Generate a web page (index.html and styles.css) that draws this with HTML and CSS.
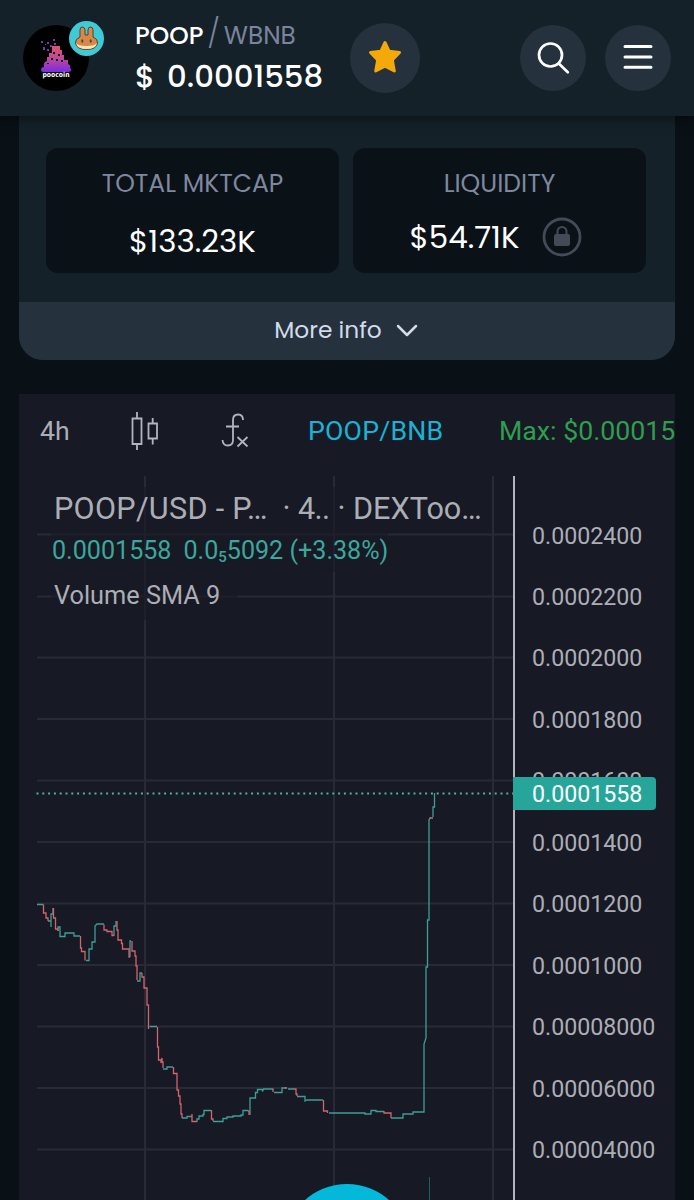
FILE: index.html
```
<!DOCTYPE html>
<html lang="en">
<head>
  <meta charset="UTF-8">
  <meta name="viewport" content="width=device-width, initial-scale=1.0">
  <title>POOP/WBNB</title>
  <link rel="stylesheet" href="styles.css">
</head>
<body>
  <header class="header">
    <div class="avatar">
      <svg class="token" viewBox="0 0 66 66">
        <defs>
          <linearGradient id="pile" x1="0" y1="0" x2="0" y2="1">
            <stop offset="0" stop-color="#e0536e"/>
            <stop offset=".5" stop-color="#bd46a0"/>
            <stop offset="1" stop-color="#7a2be0"/>
          </linearGradient>
        </defs>
        <circle cx="33" cy="33" r="33" fill="#000"/>
        <path fill="url(#pile)" d="M29 21h8v4h2v5h2v5h4v4q3 1 2 4 2 1 1 3-1 1-3 1H20q-2 0-2-2 0-3 3-3-1-5 3-6v-4h2v-4h3z"/>
        <path fill="#000" d="M30 27h2v2h-2zM35 29h2v2h-2zM28 33h2v2h-2zM33 34h2v2h-2zM38 35h2v2h-2zM24 38h2v1h-2z"/>
        <path fill="#7d35a8" d="M18 16h2v2h-2zM24 17h2v2h-2zM30 14h2v2h-2zM27 20h2v2h-2zM20 22h2v3h-2zM24 24h2v2h-2zM31 18h2v2h-2zM22 19h1v1h-1z"/>
        <text x="33" y="52" text-anchor="middle" textLength="27" lengthAdjust="spacingAndGlyphs">poocoin</text>
      </svg>
      <svg class="badge" viewBox="0 0 35 35">
        <circle cx="17.500" cy="17.500" r="17.500" fill="#3fcbd6"/>
        <g stroke="#5f3c26" stroke-width="1">
          <path fill="#d6894a" d="M11 16V9q0-3 2.300-3T16 9v5h3V9q0-3 2.500-3T24 9v7q5 2 4.500 6-1 6.500-11 6.500T6.500 22Q6 18 11 16z"/>
        </g>
        <path fill="#fae3b4" d="M7 22q2 3 10.500 3T28 22q-1 6-10.500 6T7 22z"/>
        <ellipse cx="13.300" cy="20" rx="1" ry="1.800" fill="#5f3c26"/>
        <ellipse cx="21.700" cy="20" rx="1" ry="1.800" fill="#5f3c26"/>
      </svg>
    </div>
    <div class="pair">
      <div class="names"><b>POOP</b><i>/</i><span>WBNB</span></div>
      <div class="price"><span>$</span><span class="amount">0.0001558</span></div>
    </div>
    <div class="btn fav">
      <svg width="34" height="34" viewBox="0 0 34 34">
        <path fill="#f3a908" stroke="#f3a908" stroke-width="3" stroke-linejoin="round" d="M17 2.500l4 8.700 10.500 1.300-7.200 7.400 2 11L17 26.200 7.700 30.900l2-11L2.500 12.500 13 11.200z"/>
      </svg>
    </div>
    <div class="btn search">
      <svg width="34" height="34" viewBox="0 0 34 34" fill="none" stroke="#fff" stroke-width="2.700" stroke-linecap="round">
        <circle cx="14.500" cy="14" r="11.500"/>
        <path d="M22.800 22.500l9 8.700"/>
      </svg>
    </div>
    <div class="btn">
      <svg class="bars" width="30" height="26" viewBox="0 0 30 26" stroke="#fff" stroke-width="3" stroke-linecap="round">
        <path d="M2 2.500h26M2 13h26M2 23.300h26"/>
      </svg>
    </div>
  </header>

  <section class="card">
    <div class="stats">
      <div class="stat">
        <div class="label">TOTAL MKTCAP</div>
        <div class="value">$133.23K</div>
      </div>
      <div class="stat">
        <div class="label">LIQUIDITY</div>
        <div class="value locked">
          <span>$54.71K</span>
          <svg width="40" height="40" viewBox="0 0 40 40">
            <circle cx="20" cy="20" r="18" fill="none" stroke="#454a57" stroke-width="2.800"/>
            <rect x="12" y="17" width="16" height="12" rx="2" fill="#454a57"/>
            <path d="M15.500 18v-3.500a4.500 4.500 0 0 1 9 0V18" fill="none" stroke="#454a57" stroke-width="2"/>
          </svg>
        </div>
      </div>
    </div>
    <div class="more">
      <span>More info</span>
      <svg width="22" height="14" viewBox="0 0 22 14" fill="none" stroke="#d3daea" stroke-width="2.500" stroke-linecap="round" stroke-linejoin="round">
        <path d="M2 3l9 9 9-9"/>
      </svg>
    </div>
  </section>

  <section class="chart">
    <div class="toolbar">
      <span class="interval">4h</span>
      <svg class="candles" width="28" height="40" viewBox="0 0 28 40" fill="none" stroke="#b2b5be" stroke-width="1.800">
        <path d="M1.500 7.500h9v25.500h-9zM6 1v6.500M6 33v6M17.500 12.500h8.500v15h-8.500zM21.700 7v5.500M21.700 27.500v6"/>
      </svg>
      <svg class="fx" width="28" height="36" viewBox="0 0 28 36" fill="none" stroke="#b2b5be" stroke-width="1.800">
        <path d="M22 7q0-5.500-4.800-5.500Q12 1.500 12 7v20q0 5.500-5.200 5.500Q2 32.500 1.500 27M5 13.500h13M16.500 24l10 9.500M26.500 24l-10 9.500"/>
      </svg>
      <span class="unit">POOP/BNB</span>
      <span class="max">Max: $0.0001558</span>
    </div>

    <div class="plot">
      <svg width="656" height="724" viewBox="19 476 656 724">
        <g class="grid">
          <path d="M37 534.500h476M37 596.500h476M37 657.500h476M37 719h476M37 780.500h476M37 842h476M37 903.500h476M37 965h476M37 1026.500h476M37 1088h476M37 1149.500h476"/>
          <path d="M145 476v724M334 476v724M493 476v724"/>
        </g>
        <path class="volume" d="M429.500 1177v23"/>

        <path class="up" d="M37 904.500h6.500M48 921h3v6V914h2v-6M58 931v-4h2v9.500h5V933h9v3h6M86 960.500h3V949h3v-7h3v-16l2-2h7M114 936v-10h2v-5M130 957v-16h1M137 981h3v-8h2M149.500 1026.500h7.500M163 1069h4v-2h6M182 1118h5v-1.500h5M197 1122v-3h2v-3h4v-1.500h1v-4h7M213 1121.500h10v-3h4v-1.500h6v-1h8v-1h2v-4.500h5M250 1115v-17h5.500v-5.500h2v-3h5v2l1-2.500h10M274 1092.500h8v-4.500h4v-1M288 1089h6M297 1096.500h8v4.500l2-1h16M329 1113h36v1h6v-3.500h5v1h8M391 1118h12v-4h10v-2h11V1044l2-6V967h1.500v-47h1.500V820l1.500-3M433 817v-10h1.500v-14"/>
        <path class="down" d="M43.500 904.500v8.500h2.500v5h2v3M53.500 908v10h2v11h2.500v2M80.500 936v12h1v3.500h3.500v9M104 924.500v5.500h3v1.500h5v4h2M117 921v9h1v10h3.500v3.500h1v5.500h6.500v8h1M132 941v10h3v5h1v10h1v14M142 973v4h2v11h3v17h1.500v24M157.500 1027v20h1v13h2.500v3l1-5v4h1v6M173.500 1067v6.500h3.500v16.500h1.500v6h1.500v8h1v10h1v4M192 1114v7.500h5M211.500 1110v9h1.500v2M248 1111h1v4M273 1089v3M286 1087v2M294 1089h2v5h1v2M323.500 1100v11h4v2M384 1111v2h7v5M430 818h3"/>

        <path class="last" d="M36.500 793.500H513"/>
        <path class="axis" d="M514 476v724"/>
        <g class="ticks">
          <text x="532" y="543.500">0.0002400</text>
          <text x="532" y="605">0.0002200</text>
          <text x="532" y="666">0.0002000</text>
          <text x="532" y="727.500">0.0001800</text>
          <text x="532" y="789">0.0001600</text>
          <text x="532" y="850.500">0.0001400</text>
          <text x="532" y="912">0.0001200</text>
          <text x="532" y="973.500">0.0001000</text>
          <text x="532" y="1035">0.00008000</text>
          <text x="532" y="1096.500">0.00006000</text>
          <text x="532" y="1158">0.00004000</text>
        </g>
        <path fill="#26a69a" d="M513 777h139q4 0 4 4v25q0 4-4 4H513z"/>
        <text class="current" x="532" y="802">0.0001558</text>
        <circle class="fab" cx="347" cy="1247" r="63"/>
      </svg>

      <div class="legend">
        <div class="title"><span class="symbol">POOP/USD - P…</span><em>·</em><span class="period">4..</span><em>·</em><span>DEXToo…</span></div>
        <div class="change"><span>0.0001558</span><span>0.0<sub>5</sub>5092 (+3.38%)</span></div>
        <div class="sma">Volume SMA 9</div>
      </div>
    </div>
  </section>
</body>
</html>
```
FILE: styles.css
```
* {
  box-sizing: border-box;
}

body {
  margin: 0;
  background: #091016;
  color: #fff;
  font-family: Poppins, Inter, sans-serif;
}

svg {
  display: block;
  flex: none;
}

.header {
  position: relative;
  z-index: 1;
  display: flex;
  align-items: center;
  height: 116px;
  padding: 0 23px;
  background: #142128;
  box-shadow: 0 2px 12px rgba(0, 0, 0, 0.5);
}

.avatar {
  position: relative;
  width: 112px;
}
.token {
  width: 66px;
  height: 66px;
}
.token text {
  fill: #fff;
  font: bold 7px "DejaVu Sans", sans-serif;
}
.badge {
  position: absolute;
  left: 46px;
  top: -4px;
  width: 35px;
  height: 35px;
}

.pair {
  width: 215px;
  padding-top: 2px;
}
.names {
  display: flex;
  align-items: center;
  height: 35px;
  font-size: 24.8px;
  color: #7b849c;
}
.names b {
  font-weight: 500;
  color: #fff;
}
.names i {
  margin: -2px 4px 0;
  font-size: 28px;
  font-style: normal;
  font-weight: 300;
}
.price {
  display: flex;
  gap: 12px;
  height: 48px;
  align-items: center;
  font-size: 30.8px;
  font-weight: 500;
}

.btn {
  display: flex;
  align-items: center;
  justify-content: center;
  width: 66px;
  height: 66px;
  border-radius: 50%;
  background: #25313c;
}
.fav {
  width: 70px;
  height: 70px;
}
.fav svg {
  margin-top: -2px;
}
.search {
  margin: 0 19px 0 auto;
}
.bars {
  margin-top: -3px;
}

.card {
  width: 656px;
  height: 244px;
  margin: 0 19px;
  border-radius: 0 0 24px 24px;
  overflow: hidden;
  background: #142128;
}
.stats {
  display: flex;
  gap: 14px;
  height: 186px;
  padding: 32px 29px 29px 27px;
}
.stat {
  flex: 1;
  padding-top: 18px;
  border-radius: 12px;
  background: #0a1117;
  text-align: center;
}
.label {
  height: 36px;
  line-height: 36px;
  font-size: 25px;
  color: #7f889f;
}
.value {
  display: flex;
  align-items: center;
  justify-content: center;
  height: 40px;
  margin-top: 19px;
  font-size: 31px;
}
.locked {
  gap: 22px;
  margin-top: 15px;
  padding-right: 8px;
}
.more {
  display: flex;
  align-items: center;
  justify-content: center;
  gap: 14px;
  height: 58px;
  padding: 0 2px 2px 0;
  background: #25313c;
  color: #d3daea;
  font-size: 23.3px;
}

.chart {
  width: 656px;
  height: 806px;
  margin: 34px 19px 0;
  overflow: hidden;
  background: #171924;
  color: #acaeb5;
  font-family: Roboto, sans-serif;
}
.toolbar {
  display: flex;
  align-items: center;
  height: 82px;
  padding: 0 0 8px 21px;
  font-size: 26.7px;
  white-space: nowrap;
}
.toolbar > * {
  flex: none;
}
.interval {
  width: 91px;
}
.candles {
  margin-right: 62px;
}
.fx {
  margin-right: 59px;
}
.unit {
  width: 191px;
  letter-spacing: 0.2px;
  color: #18b4d6;
}
.max {
  color: #2e9e4f;
}

.plot {
  position: relative;
}
.grid path {
  fill: none;
  stroke: #282a35;
  stroke-width: 2;
}
.volume {
  stroke: #1c5f60;
}
.up,
.down {
  fill: none;
  stroke: #3d9f98;
  stroke-width: 1.3;
}
.down {
  stroke: #d4636b;
}
.last {
  stroke: #4fb0a8;
  stroke-width: 2;
  stroke-dasharray: 2 3.8;
}
.axis {
  stroke: #b2b5be;
  stroke-width: 2;
}
.ticks text,
.current {
  fill: #acaeb5;
  font-size: 23.2px;
}
.current {
  fill: #fff;
}
.fab {
  fill: #04b8d9;
}

/* sits on top of the grid */
.legend {
  position: absolute;
  left: 32px;
  top: 11px;
}
.legend > div {
  width: max-content;
  white-space: nowrap;
  background: rgba(23, 25, 36, 0.6);
}
.title {
  display: flex;
  height: 42px;
  padding-left: 3px;
  align-items: center;
  font-size: 30.6px;
}
.title em {
  width: 28px;
  padding-left: 5px;
  text-align: center;
  font-style: normal;
}
.symbol {
  width: 216px;
  letter-spacing: 0.3px;
}
.period {
  width: 27px;
  letter-spacing: -0.6px;
}
.change {
  display: flex;
  gap: 12px;
  height: 43px;
  line-height: 44px;
  padding-left: 1px;
  font-size: 25.1px;
  color: #3aa89c;
}
.change sub {
  font-size: 15px;
  font-weight: 500;
  line-height: 0;
  vertical-align: -3px;
}
.sma {
  height: 48px;
  padding: 0 18px 0 3px;
  line-height: 48px;
  font-size: 25.3px;
}
```
